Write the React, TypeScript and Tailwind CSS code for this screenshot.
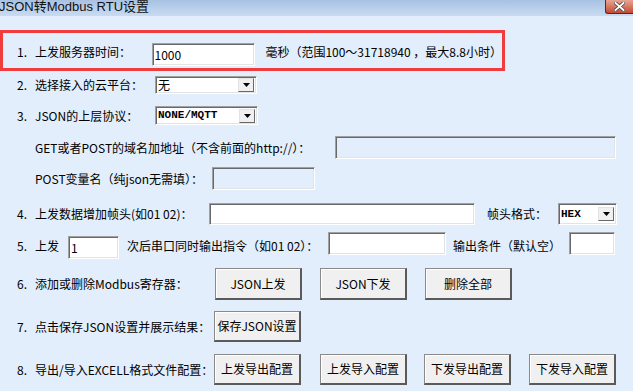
import React from "react";

const font = { fontFamily: '"Noto Sans CJK SC", "Liberation Sans", sans-serif' };
const mono = { fontFamily: '"Liberation Mono", monospace' };

function Num({ n }: { n: string }) {
  return <span className="inline-block w-[18px]">{n}</span>;
}

function Field({ w, h, text, disabled, className = "" }: { w: string; h: string; text?: string; disabled?: boolean; className?: string }) {
  return (
    <div
      className={`${w} ${h} ${className} flex items-center border border-[#a0a0a0] border-b-white border-r-white pl-[2px] text-[12px] leading-none shadow-[inset_1px_1px_0_#696969,inset_-1px_-1px_0_#e3e3e3] ${
        disabled ? "bg-[#e2eefb]" : "bg-white"
      }`}
    >
      {text}
    </div>
  );
}

function Select({ w, h, text, latin }: { w: string; h: string; text: string; latin?: boolean }) {
  return (
    <div
      className={`${w} ${h} flex items-center border border-[#a0a0a0] border-b-white border-r-white bg-white pl-[2px] pr-[2px] text-[12px] leading-none shadow-[inset_1px_1px_0_#696969,inset_-1px_-1px_0_#e3e3e3]`}
    >
      {latin ? (
        <span className="flex-1 text-[11px] font-bold" style={mono}>
          {text}
        </span>
      ) : (
        <span className="flex-1">{text}</span>
      )}
      <div className="flex h-[14px] w-[16px] items-center justify-center border border-[#e3e3e3] border-b-[#696969] border-r-[#696969] bg-[#f0f0f0]">
        <svg width="7" height="4" viewBox="0 0 7 4">
          <path d="M0 0h7L3.5 4z" fill="#000" />
        </svg>
      </div>
    </div>
  );
}

function Btn({ children, className = "" }: { children: React.ReactNode; className?: string }) {
  return (
    <div
      className={`flex h-full w-[87px] items-center justify-center border border-[#8a8a8a] border-b-2 border-r-2 border-b-[#5a5a5a] border-r-[#5a5a5a] bg-[#f0f0f0] text-[12px] leading-none shadow-[inset_1px_1px_0_#ffffff] ${className}`}
    >
      {children}
    </div>
  );
}

export default function App() {
  return (
    <div className="h-[391px] w-[633px] overflow-hidden bg-[#e2eefb] text-black" style={font}>
      {/* title bar */}
      <div className="flex h-[16px] items-start bg-gradient-to-b from-[#a8c2e3] to-[#c9dbf1]">
        <span
          className="ml-[-1px] mt-[-1px] text-[13px] leading-[16px] text-[#111]"
          style={{ fontFamily: '"Liberation Sans", "Noto Sans CJK SC", sans-serif' }}
        >
          JSON转Modbus RTU设置
        </span>
        <div className="ml-auto flex h-[14px] w-[28px] items-center justify-center rounded-bl-[3px] border border-t-0 border-r-0 border-[#6b2317] bg-gradient-to-b from-[#e8a493] to-[#c5472f]">
          <svg width="11" height="9" viewBox="0 0 11 9">
            <path d="M1.5 1l8 7M9.5 1l-8 7" stroke="#4a4a4a" strokeWidth="3.4" strokeLinecap="square" />
            <path d="M1.5 1l8 7M9.5 1l-8 7" stroke="#fff" strokeWidth="1.8" strokeLinecap="square" />
          </svg>
        </div>
      </div>

      <div className="flex flex-col text-[12px] leading-none">
        {/* 1 */}
        <div className="mt-[14px] flex h-[41px] w-[505px] items-start border-[3px] border-[#f03c3c] pl-[14px] pt-[7px]">
          <div className="flex h-[23px] w-[136px] items-center">
            <Num n="1." />
            上发服务器时间：
          </div>
          <Field w="w-[105px]" h="h-[23px]" text="1000" className="mt-[3px]" />
          <div className="ml-[10px] flex h-[23px] items-center whitespace-nowrap">毫秒（范围100～31718940 ，最大8.8小时）</div>
        </div>

        {/* 2 */}
        <div className="mt-[5px] flex h-[18px] items-center pl-[17px]">
          <div className="w-[138px]">
            <Num n="2." />
            选择接入的云平台：
          </div>
          <Select w="w-[102px]" h="h-[18px]" text="无" />
        </div>

        {/* 3 */}
        <div className="mt-[12px] flex h-[19px] items-center pl-[17px]">
          <div className="w-[138px]">
            <Num n="3." />
            JSON的上层协议：
          </div>
          <Select w="w-[103px]" h="h-[19px]" text="NONE/MQTT" latin />
        </div>

        {/* GET */}
        <div className="mt-[11px] flex h-[23px] items-center pl-[35px]">
          <div className="w-[300px]">GET或者POST的域名加地址（不含前面的http://）：</div>
          <Field w="w-[281px]" h="h-[23px]" disabled />
        </div>

        {/* POST */}
        <div className="mt-[8px] flex h-[23px] items-center pl-[35px]">
          <div className="w-[177px]">POST变量名（纯json无需填）：</div>
          <Field w="w-[103px]" h="h-[23px]" disabled />
        </div>

        {/* 4 */}
        <div className="mt-[13px] flex h-[22px] items-center pl-[17px]">
          <div className="w-[192px]">
            <Num n="4." />
            上发数据增加帧头(如01 02)：
          </div>
          <Field w="w-[266px]" h="h-[22px]" />
          <div className="ml-[12px] w-[71px]">帧头格式：</div>
          <Select w="w-[59px]" h="h-[22px]" text="HEX" latin />
        </div>

        {/* 5 */}
        <div className="mt-[7px] flex h-[27px] items-center pl-[17px]">
          <div className="w-[51px]">
            <Num n="5." />
            上发
          </div>
          <Field w="w-[51px]" h="h-[23px]" text="1" className="self-end" />
          <div className="ml-[8px] w-[201px] whitespace-nowrap">次后串口同时输出指令（如01 02）：</div>
          <Field w="w-[118px]" h="h-[23px]" className="self-start" />
          <div className="ml-[7px] w-[116px] whitespace-nowrap">输出条件（默认空）</div>
          <Field w="w-[46px]" h="h-[23px]" className="self-start" />
        </div>

        {/* 6 */}
        <div className="mt-[9px] flex h-[32px] items-center pl-[17px]">
          <div className="w-[198px]">
            <Num n="6." />
            添加或删除Modbus寄存器：
          </div>
          <Btn className="w-[86px]">JSON上发</Btn>
          <Btn className="ml-[18px]">JSON下发</Btn>
          <Btn className="ml-[18px]">删除全部</Btn>
        </div>

        {/* 7 */}
        <div className="mt-[11px] flex h-[31px] items-center pl-[17px]">
          <div className="w-[197px]">
            <Num n="7." />
            点击保存JSON设置并展示结果：
          </div>
          <Btn>保存JSON设置</Btn>
        </div>

        {/* 8 */}
        <div className="mt-[12px] flex h-[31px] items-center pl-[17px]">
          <div className="w-[197px] whitespace-nowrap">
            <Num n="8." />
            导出/导入EXCELL格式文件配置：
          </div>
          <Btn>上发导出配置</Btn>
          <Btn className="ml-[19px]">上发导入配置</Btn>
          <Btn className="ml-[17px]">下发导出配置</Btn>
          <Btn className="ml-[18px]">下发导入配置</Btn>
        </div>
      </div>
    </div>
  );
}
